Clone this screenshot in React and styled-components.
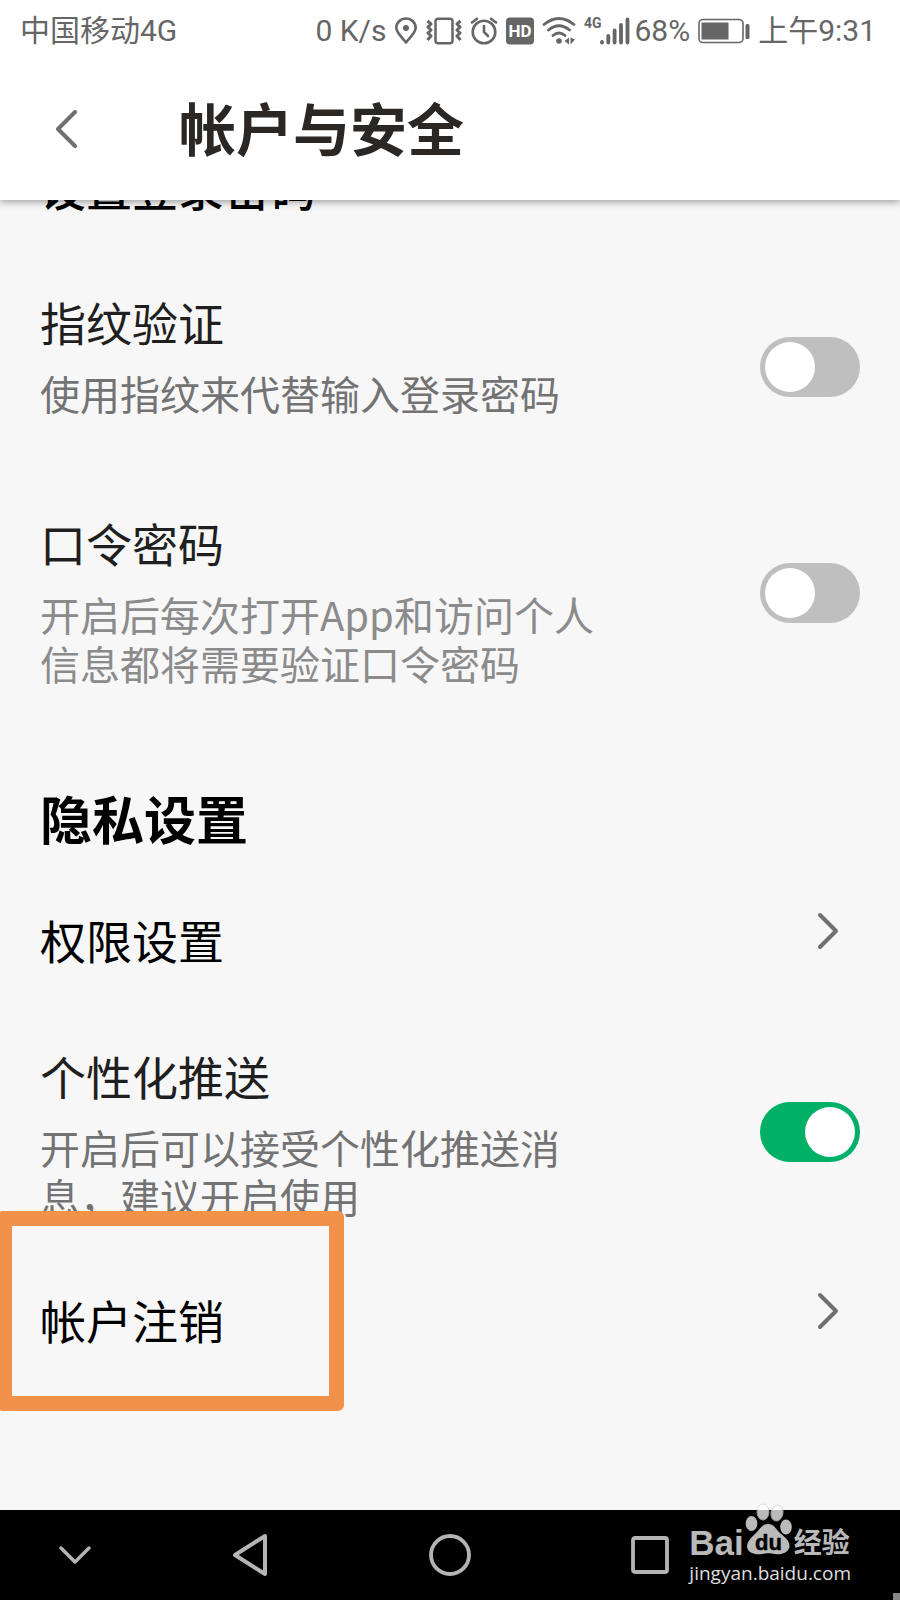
import React, { useState } from "react";
import styled, { createGlobalStyle } from "styled-components";

const GlobalStyle = createGlobalStyle`
  * {
    box-sizing: border-box;
  }

  body {
    margin: 0;
    background: #f7f7f7;
    font-family: "Noto Sans CJK SC", "Noto Sans", sans-serif;
  }
`;

const Page = styled.div`
  display: flex;
  flex-direction: column;
  min-height: 100vh;
  overflow: hidden;
`;

const Header = styled.header`
  position: relative;
  z-index: 1;
  background: white;
  box-shadow: 0 1px 8px rgba(0, 0, 0, 0.45);
`;

const StatusBar = styled.div`
  display: flex;
  align-items: center;
  height: 60px;
  padding: 2px 24px 0 20px;
  color: #666;
  font-family: Roboto, "Noto Sans CJK SC", sans-serif;
  font-size: 30px;
  line-height: 40px;
  white-space: nowrap;

  svg {
    flex: none;
  }
`;

const StatusIcons = styled.div`
  display: flex;
  align-items: center;
  gap: 8px;
  margin-left: auto;
`;

const SignalGroup = styled.div`
  display: flex;
  align-items: center;
  gap: 4px;
`;

const AppBar = styled.div`
  display: flex;
  align-items: center;
  height: 140px;
  padding-left: 46px;
`;

const BackButton = styled.button`
  display: flex;
  width: 133px;
  padding: 8px;
  border: 0;
  background: none;
  cursor: pointer;
`;

const Title = styled.h1`
  margin: 0 0 8px;
  color: #2a2725;
  font-size: 57px;
  line-height: 72px;
  font-weight: 700;
`;

const Content = styled.main`
  flex: 1;
  margin-top: -44px;
  padding-bottom: 60px;
`;

const SectionTitle = styled.h2`
  margin: 67px 40px 6px;
  color: black;
  font-size: 52px;
  line-height: 70px;
  font-weight: 700;
`;

const Row = styled.div`
  display: flex;
  align-items: center;
  justify-content: space-between;
  padding: 0 40px;
`;

const LinkRow = styled.a`
  position: relative;
  display: flex;
  align-items: center;
  justify-content: space-between;
  padding: 0 60px 0 40px;
  color: black;
  text-decoration: none;
`;

const RowText = styled.div`
  padding-top: ${(props) => props.$top}px;
  padding-bottom: ${(props) => props.$bottom}px;
`;

const RowTitle = styled.label`
  display: block;
  color: ${(props) => props.$color || "#1f1f1f"};
  font-size: 46px;
  line-height: 60px;
  font-weight: ${(props) => props.$weight || 400};
`;

const Description = styled.p`
  margin: 18px 0 0;
  color: ${(props) => (props.$light ? "#8b8b8b" : "#737373")};
  font-size: 40px;
  line-height: 49px;
  white-space: pre-line;
`;

const Toggle = styled.input`
  appearance: none;
  display: flex;
  flex: none;
  width: 100px;
  height: 60px;
  margin: 0;
  padding: 5px;
  border-radius: 30px;
  background: #bfbfbf;
  cursor: pointer;

  &::before {
    content: "";
    width: 50px;
    height: 50px;
    border-radius: 50%;
    background: white;
  }

  &:checked {
    justify-content: flex-end;
    background: #00b067;
  }
`;

const Highlight = styled.div`
  position: absolute;
  top: -50px;
  left: -3px;
  width: 347px;
  height: 200px;
  border: 15px solid #f29149;
  border-radius: 6px;
  pointer-events: none;
`;

const NavBar = styled.nav`
  position: relative;
  display: grid;
  grid-template-columns: 3fr 4fr 4fr 4fr 3fr;
  height: 90px;
  background: black;
`;

const NavButton = styled.button`
  display: flex;
  align-items: center;
  justify-content: center;
  padding: 0;
  border: 0;
  background: none;
  cursor: pointer;
`;

const Watermark = styled.div`
  position: absolute;
  right: 49px;
  bottom: 15px;
  color: #b9b9b9;
`;

const Brand = styled.div`
  display: flex;
  align-items: flex-end;
  height: 58px;
  font-family: "Liberation Sans", "Noto Sans CJK SC", sans-serif;
  font-weight: 700;
  font-size: 35px;
  line-height: 36px;

  svg {
    margin-bottom: 5px;
  }
`;

const BrandCn = styled.span`
  margin-left: 2px;
  font-family: "Noto Sans CJK SC", sans-serif;
  font-size: 28px;
  line-height: 40px;
`;

const Site = styled.div`
  color: #dedede;
  font-family: "Open Sans", "Noto Sans", sans-serif;
  font-size: 19px;
  line-height: 24px;
`;

const Corner = styled.div`
  position: absolute;
  right: 0;
  bottom: 0;
  width: 7px;
  height: 7px;
  background: #888;
`;

const Chevron = () => (
  <svg width="24" height="40" viewBox="0 0 24 40" fill="none" stroke="#707070" strokeWidth="4" strokeLinecap="round" strokeLinejoin="round">
    <path d="M4 4L20 20L4 36" />
  </svg>
);

const PinIcon = () => (
  <svg width="24" height="28" viewBox="0 0 24 28" fill="none" stroke="#666" strokeWidth="2.6">
    <path d="M12 25.5C9 21 2.300 16 2.300 10.800A9.700 9.300 0 0 1 21.700 10.800C21.700 16 15 21 12 25.500Z" strokeLinejoin="round" />
    <circle cx="12" cy="11" r="3" fill="#666" stroke="none" />
  </svg>
);

const VibrateIcon = () => (
  <svg width="36" height="28" viewBox="0 0 36 28" fill="none" stroke="#666" strokeWidth="2.5">
    <rect x="9.500" y="1.700" width="17" height="24.600" rx="2.500" />
    <path d="M1.500 4L5 7L2 10L5 13L2 16L5 19L1.500 23M34.500 4L31 7L34 10L31 13L34 16L31 19L34.500 23" strokeWidth="3" strokeLinejoin="round" />
  </svg>
);

const AlarmIcon = () => (
  <svg width="28" height="28" viewBox="0 0 28 28" fill="none" stroke="#666" strokeWidth="2.600" strokeLinecap="round">
    <circle cx="14" cy="15" r="11.300" />
    <path d="M14 9V15L18 19M2 5.500L7 1.800M26 5.500L21 1.800" />
  </svg>
);

const HdIcon = () => (
  <svg width="28" height="28" viewBox="0 0 28 28">
    <rect y="0.500" width="28" height="27" rx="4" fill="#666" />
    <text x="14" y="20" fill="white" fontFamily="Roboto, sans-serif" fontSize="17" fontWeight="700" textAnchor="middle">HD</text>
  </svg>
);

const WifiIcon = () => (
  <svg width="34" height="28" viewBox="0 0 34 28" fill="none" stroke="#666" strokeWidth="2.800" strokeLinecap="round">
    <path d="M2 7.500Q17 -4.500 32 7.500M6.500 13Q17 4.500 27.500 13M11 18.500Q17 13.500 23 18.500" />
    <circle cx="17" cy="24" r="2.800" fill="#666" stroke="none" />
    <path d="M27 20.500V27.500L22.500 24ZM28.500 20.500V27.500L33 22.500Z" fill="#666" stroke="none" />
  </svg>
);

const SignalIcon = () => (
  <svg width="46" height="36" viewBox="0 -4 46 36" fill="none" stroke="#666" strokeWidth="3.800" strokeLinecap="round">
    <text x="0" y="11" fill="#666" stroke="none" fontFamily="Roboto, sans-serif" fontSize="14" fontWeight="700">4G</text>
    <path d="M18 25.500V25M24.300 25.500V19M30.600 25.500V13.500M37 25.500V8M43.500 25.500V2.500" />
  </svg>
);

const BatteryIcon = () => (
  <svg width="52" height="26" viewBox="0 0 52 26">
    <rect x="1" y="1.500" width="44" height="23" rx="4" fill="none" stroke="#666" strokeWidth="1.600" />
    <rect x="3.500" y="4.500" width="27" height="17" fill="#666" />
    <rect x="47.500" y="6" width="4" height="15" rx="1.500" fill="#666" />
  </svg>
);

const Paw = () => (
  <svg width="48" height="54" viewBox="0 0 48 54">
    <g fill="white" opacity="0.73">
      <ellipse cx="7.500" cy="21.500" rx="5.800" ry="7.500" />
      <ellipse cx="19" cy="10" rx="6" ry="8" stroke="#d0d0d0" />
      <ellipse cx="33" cy="11" rx="6" ry="8" stroke="#d0d0d0" transform="rotate(12 33 11)" />
      <ellipse cx="42" cy="25" rx="5.800" ry="7.500" />
      <path d="M24 22C30 22 32 27 36 31C41 35 46 39 45.500 45C44 51 37 53 31 52C26 51 23 51 18 52C11 53 4 51 3 45C3 39 8 35 12 31C16 27 18 22 24 22Z" />
    </g>
    <text x="24.500" y="48" fill="black" stroke="black" strokeWidth="0.500" fontFamily="Liberation Sans, sans-serif" fontSize="22" textAnchor="middle">du</text>
  </svg>
);

const SwitchRow = ({ id, title, text, light, top, bottom, on }) => {
  const [checked, setChecked] = useState(Boolean(on));

  return (
    <Row>
      <RowText $top={top} $bottom={bottom}>
        <RowTitle htmlFor={id}>{title}</RowTitle>
        <Description $light={light}>{text}</Description>
      </RowText>
      <Toggle
        id={id}
        type="checkbox"
        role="switch"
        checked={checked}
        onChange={() => setChecked(!checked)}
      />
    </Row>
  );
};

const App = () => {
  return (
    <Page>
      <GlobalStyle />
      <Header>
        <StatusBar>
          <span>中国移动4G</span>
          <StatusIcons>
            <span>0 K/s</span>
            <PinIcon />
            <VibrateIcon />
            <AlarmIcon />
            <HdIcon />
            <WifiIcon />
            <SignalGroup>
              <SignalIcon />
              <span>68%</span>
            </SignalGroup>
            <BatteryIcon />
            <span>上午9:31</span>
          </StatusIcons>
        </StatusBar>
        <AppBar>
          <BackButton aria-label="返回">
            <svg width="24" height="40" viewBox="0 0 24 40" fill="none" stroke="#707070" strokeWidth="4" strokeLinecap="round" strokeLinejoin="round">
              <path d="M21 2L4 19L21 36" />
            </svg>
          </BackButton>
          <Title>帐户与安全</Title>
        </AppBar>
      </Header>

      <Content>
        <LinkRow href="#password">
          <RowText $top={0} $bottom={48}>
            <RowTitle as="span" $color="black" $weight={500}>设置登录密码</RowTitle>
          </RowText>
        </LinkRow>
        <SwitchRow id="fingerprint" title="指纹验证" text="使用指纹来代替输入登录密码" top={27} bottom={52} />
        <SwitchRow
          id="passcode"
          title="口令密码"
          text={"开启后每次打开App和访问个人\n信息都将需要验证口令密码"}
          light
          top={42}
          bottom={28}
        />

        <SectionTitle>隐私设置</SectionTitle>
        <LinkRow href="#permissions">
          <RowText $top={50} $bottom={34}>
            <RowTitle as="span" $color="black">权限设置</RowTitle>
          </RowText>
          <Chevron />
        </LinkRow>
        <SwitchRow
          id="push"
          title="个性化推送"
          text={"开启后可以接受个性化推送消\n息，建议开启使用"}
          top={42}
          bottom={40}
          on
        />
        <LinkRow href="#close-account">
          <RowText $top={28} $bottom={12}>
            <RowTitle as="span" $color="black">帐户注销</RowTitle>
          </RowText>
          <Chevron />
          <Highlight />
        </LinkRow>
      </Content>

      <NavBar>
        <NavButton aria-label="收起">
          <svg width="34" height="20" viewBox="0 0 34 20" fill="none" stroke="#b4b4b4" strokeWidth="3.500" strokeLinecap="round" strokeLinejoin="round">
            <path d="M3 3L17 17L31 3" />
          </svg>
        </NavButton>
        <NavButton aria-label="后退">
          <svg width="40" height="44" viewBox="0 0 40 44" fill="none" stroke="#b4b4b4" strokeWidth="4" strokeLinejoin="round">
            <path d="M5 22L35 3V41Z" />
          </svg>
        </NavButton>
        <NavButton aria-label="主页">
          <svg width="44" height="44" viewBox="0 0 44 44" fill="none" stroke="#b4b4b4" strokeWidth="3.800">
            <circle cx="22" cy="22" r="19" />
          </svg>
        </NavButton>
        <NavButton aria-label="最近任务">
          <svg width="40" height="40" viewBox="0 0 40 40" fill="none" stroke="#b4b4b4" strokeWidth="3.800">
            <rect x="3" y="3" width="34" height="34" rx="2" />
          </svg>
        </NavButton>
        <Watermark>
          <Brand>
            Bai
            <Paw />
            <BrandCn>经验</BrandCn>
          </Brand>
          <Site>jingyan.baidu.com</Site>
        </Watermark>
        <Corner />
      </NavBar>
    </Page>
  );
};

export default App;
